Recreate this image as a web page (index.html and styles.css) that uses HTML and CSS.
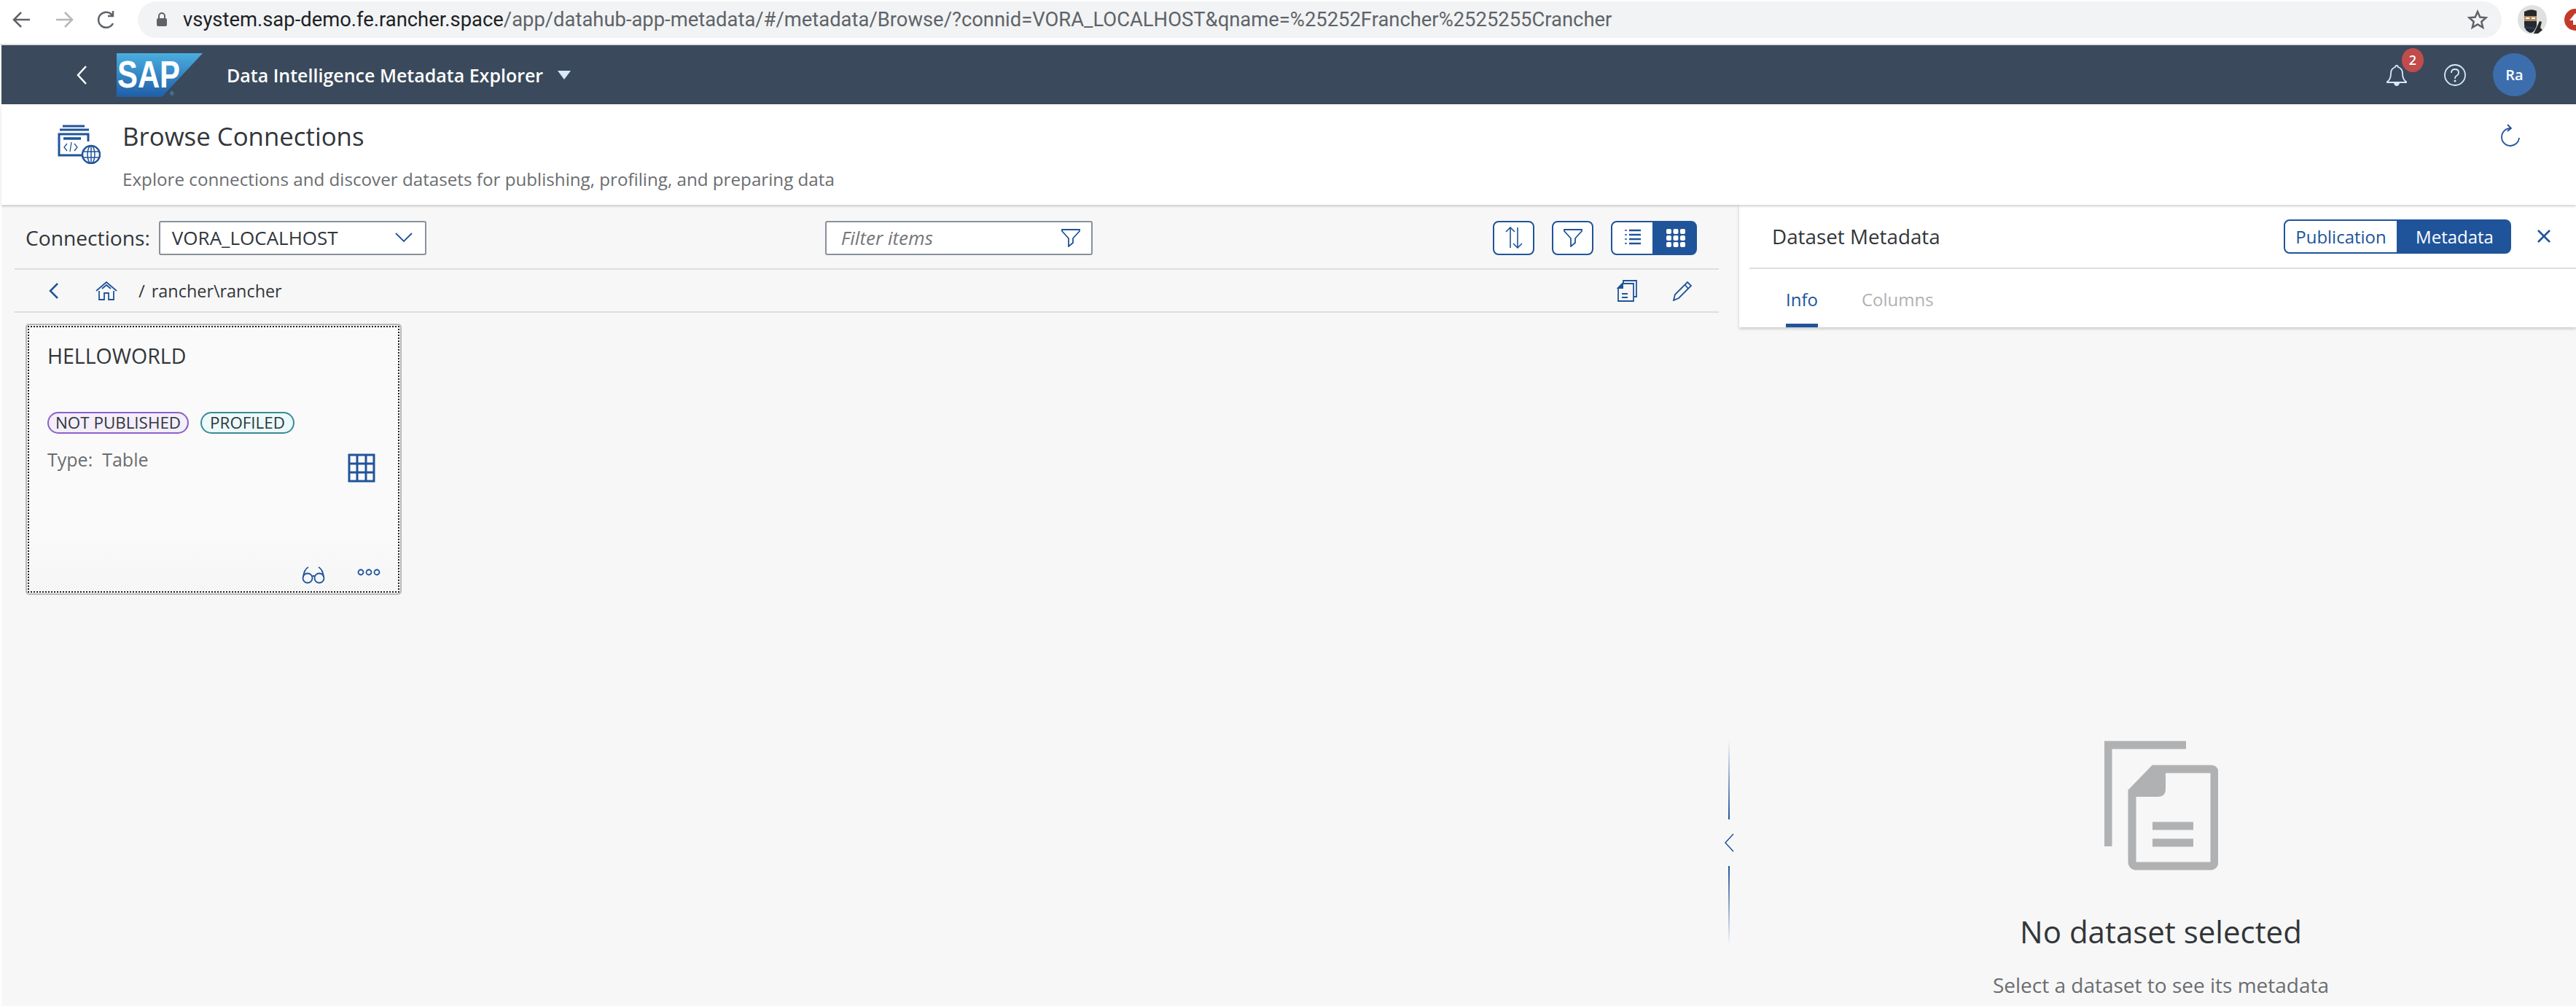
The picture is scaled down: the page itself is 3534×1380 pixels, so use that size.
FILE: index.html
```html
<!DOCTYPE html>
<html lang="en">
<head>
<meta charset="utf-8">
<title>Browse Connections</title>
<link rel="stylesheet" href="styles.css">
</head>
<body>
<div class="browser">
  <svg class="nav-ic first" width="26" height="26" viewBox="0 0 26 26"><path d="M24 13H3M12 3 2 13l10 10" class="st-dark"/></svg>
  <svg class="nav-ic" width="26" height="26" viewBox="0 0 26 26"><path d="M2 13h21M14 3l10 10-10 10" class="st-grey"/></svg>
  <svg class="nav-ic" width="26" height="28" viewBox="0 0 26 28"><path d="M22 19a10.500 10.500 0 1 1-1-11M22 2v7h-7" class="st-dark"/></svg>
  <div class="omnibox">
    <svg class="lock" width="16" height="20" viewBox="0 0 16 20"><path d="M4 8V5a4 4 0 0 1 8 0v3" fill="none" stroke="#5f6368" stroke-width="2"/><rect x="1" y="8" width="14" height="11" rx="2" fill="#5f6368"/></svg>
    <span class="url"><span class="url-host">vsystem.sap-demo.fe.rancher.space</span>/app/datahub-app-metadata/#/metadata/Browse/?connid=VORA_LOCALHOST&amp;qname=%25252Francher%2525255Crancher</span>
    <svg class="star" width="28" height="28" viewBox="0 0 28 28"><path d="m14 3 3.300 7.600 8.200.7-6.200 5.400 1.900 8L14 20.500 6.800 24.700l1.900-8L2.500 11.300l8.200-.7z" fill="none" stroke="#5f6368" stroke-width="2.500"/></svg>
  </div>
  <svg class="ninja" width="40" height="40" viewBox="0 0 40 40"><ellipse cx="20" cy="20" rx="20" ry="20" fill="#e0e0e0"/><path d="M9 9q9-5 17-1v20q-3 10-9 10-8-3-8-12z" fill="#26282b"/><rect x="9" y="15" width="17" height="7" fill="#b08a64"/><path d="M11 18h5M19 18h5" stroke="#fff" stroke-width="2"/><path d="M9 30l14 2" stroke="#1f3f7a" stroke-width="2"/><path d="m30 22 3 1-2 8 3 3-6 5-6 0z" fill="#26282b"/></svg>
  <svg class="ext" width="30" height="30" viewBox="0 0 30 30"><circle cx="15" cy="15" r="15" fill="#c5392b"/><path d="M15 6 7 16h5v6h6v-6h5z" fill="#fff"/></svg>
</div>
<header class="shell">
  <svg class="shell-back" width="16" height="26" viewBox="0 0 16 26"><path d="M14 1 3 13l11 12" fill="none" stroke="#fff" stroke-width="2.500"/></svg>
  <svg class="sap" width="118" height="60" viewBox="0 0 118 60">
    <defs><linearGradient id="sapg" x1="0" y1="0" x2="0" y2="1"><stop offset="0" stop-color="#4aaee0"/><stop offset="1" stop-color="#1f5ea8"/></linearGradient></defs>
    <polygon points="0,0 118,0 62,60 0,60" fill="url(#sapg)"/>
    <text x="1" y="47" class="sap-text" textLength="86" lengthAdjust="spacingAndGlyphs">SAP</text>
    <text x="73" y="58" class="sap-reg">®</text>
  </svg>
  <span class="shell-title">Data Intelligence Metadata Explorer</span>
  <svg class="caret" width="18" height="12" viewBox="0 0 18 12"><path d="M0 0h18L9 12z" fill="#d8e9fb"/></svg>
  <div class="shell-right">
    <div class="bell">
      <svg width="28" height="30" viewBox="0 0 28 30"><path d="M14 2q2 0 2 2 6 2 6 9 0 8 5 11v1H1v-1q5-3 5-11 0-7 6-9 0-2 2-2z" fill="none" stroke="#d8e9fb" stroke-width="1.800"/><path d="M10 26h8q-1 4-4 4t-4-4z" fill="#d8e9fb"/></svg>
      <span class="badge">2</span>
    </div>
    <svg class="help" width="30" height="30" viewBox="0 0 30 30"><circle cx="15" cy="15" r="14" fill="none" stroke="#d8e9fb" stroke-width="1.800"/><path d="M10 12q0-5 5-5t5 4.500q0 3-3 4.500-2 1-2 4" fill="none" stroke="#d8e9fb" stroke-width="1.800"/><circle cx="15" cy="23" r="1.500" fill="#d8e9fb"/></svg>
    <div class="user">Ra</div>
  </div>
</header>
<section class="page-head">
  <svg class="page-ic" width="60" height="54" viewBox="0 0 60 54">
    <path d="M8 2h30M4 7h40" stroke="#20549a" stroke-width="3"/>
    <path d="M36 42H3V13h40v10" fill="none" stroke="#20549a" stroke-width="3"/>
    <path d="M9 19h24" stroke="#20549a" stroke-width="3.500"/>
    <path d="M14 26l-4 5 4 5M20 24l-2 13M24 26l4 5-4 5" fill="none" stroke="#20549a" stroke-width="1.300"/>
    <circle cx="47" cy="41" r="12" fill="#fff" stroke="#20549a" stroke-width="2.500"/>
    <ellipse cx="47" cy="41" rx="5" ry="12" fill="none" stroke="#20549a" stroke-width="1.500"/>
    <path d="M35 37h24M35 45h24M47 29v24" stroke="#20549a" stroke-width="1.500"/>
  </svg>
  <div class="page-text">
    <h1 class="page-title">Browse Connections</h1>
    <p class="page-sub">Explore connections and discover datasets for publishing, profiling, and preparing data</p>
  </div>
  <svg class="refresh" width="28" height="32" viewBox="0 0 28 32"><path d="M14 6a12 12 0 1 0 12 13M10 1l5 5-5 4" fill="none" stroke="#20549a" stroke-width="1.800"/></svg>
</section>
<main class="workspace">
  <section class="browse">
    <div class="toolbar">
      <label class="conn-label">Connections:</label>
      <div class="select"><span>VORA_LOCALHOST</span>
        <svg width="24" height="14" viewBox="0 0 24 14"><path d="M1 1l11 11L23 1" fill="none" stroke="#20549a" stroke-width="1.800"/></svg>
      </div>
      <div class="filter"><span>Filter items</span>
        <svg width="26" height="26" viewBox="0 0 26 26"><path d="M1 2h24v2L16 14v6l-6 5V14L1 4z" fill="none" stroke="#20549a" stroke-width="1.800"/></svg>
      </div>
      <div class="tools">
        <button class="tbtn"><svg width="30" height="30" viewBox="0 0 30 30"><path d="M10 29V1M4 7l6-6 6 6M20 1v28M14 23l6 6 6-6" fill="none" stroke="#20549a" stroke-width="1.600"/></svg></button>
        <button class="tbtn"><svg width="26" height="26" viewBox="0 0 26 26"><path d="M1 2h24v2L16 14v6l-6 5V14L1 4z" fill="none" stroke="#20549a" stroke-width="1.800"/></svg></button>
        <div class="seg-view">
          <button class="vbtn"><svg width="26" height="26" viewBox="0 0 26 26"><path d="M8 3h16M8 9h16M8 15h16M8 21h16" stroke="#20549a" stroke-width="2.500"/><path d="M2 3h3M2 9h3M2 15h3M2 21h3" stroke="#20549a" stroke-width="1.500"/></svg></button>
          <button class="vbtn on"><svg width="28" height="26" viewBox="0 0 28 26"><g fill="#fff"><rect x="1" y="1" width="7" height="7" rx="2"/><rect x="10.500" y="1" width="7" height="7" rx="2"/><rect x="20" y="1" width="7" height="7" rx="2"/><rect x="1" y="10" width="7" height="7" rx="2"/><rect x="10.500" y="10" width="7" height="7" rx="2"/><rect x="20" y="10" width="7" height="7" rx="2"/><rect x="1" y="19" width="7" height="7" rx="2"/><rect x="10.500" y="19" width="7" height="7" rx="2"/><rect x="20" y="19" width="7" height="7" rx="2"/></g></svg></button>
        </div>
      </div>
    </div>
    <div class="crumbs">
      <svg class="cr-back" width="16" height="24" viewBox="0 0 16 24"><path d="M13 2 3 12l10 10" fill="none" stroke="#20549a" stroke-width="2.500"/></svg>
      <svg class="cr-home" width="30" height="26" viewBox="0 0 30 26"><path d="M1 13 15 1l14 12M5 13v12h7v-9h6v9h7V13M9 10l6-5 6 5" fill="none" stroke="#20549a" stroke-width="1.800"/></svg>
      <span class="cr-sep">/</span>
      <span class="cr-path">rancher\rancher</span>
      <div class="cr-tools">
        <svg width="28" height="30" viewBox="0 0 28 30"><path d="M9 5V1h18v22h-3" fill="none" stroke="#20549a" stroke-width="1.800"/><path d="M8 5h15v24H2V11z" fill="none" stroke="#20549a" stroke-width="1.800"/><path d="M7 19h8M7 24h8M2 11h6V5z" stroke="#20549a" stroke-width="2" fill="#20549a"/></svg>
        <svg width="28" height="28" viewBox="0 0 28 28"><path d="M21 2l5 5L9 24l-7 3 2-8zM18 6l4 5" fill="none" stroke="#20549a" stroke-width="1.800"/></svg>
      </div>
    </div>
    <article class="card">
      <div class="card-inner">
        <h2 class="card-title">HELLOWORLD</h2>
        <div class="tags"><span class="tag tag-purple">NOT PUBLISHED</span><span class="tag tag-teal">PROFILED</span></div>
        <div class="card-meta">
          <span class="card-type">Type:&nbsp; Table</span>
          <svg class="card-kind" width="38" height="40" viewBox="0 0 38 40"><path d="M2 2h34v36H2zM13 2v36M25 2v36M2 14h34M2 26h34" fill="none" stroke="#20549a" stroke-width="3"/></svg>
        </div>
        <div class="card-actions">
          <svg width="32" height="24" viewBox="0 0 32 24"><circle cx="8" cy="16" r="6.500" fill="none" stroke="#20549a" stroke-width="1.800"/><circle cx="24" cy="16" r="6.500" fill="none" stroke="#20549a" stroke-width="1.800"/><path d="M14 14q2-2 4 0M2 15Q3 4 9 1M30 15Q29 4 23 1" fill="none" stroke="#20549a" stroke-width="1.800"/></svg>
          <svg class="card-more" width="32" height="10" viewBox="0 0 32 10"><circle cx="5" cy="5" r="3.500" fill="none" stroke="#20549a" stroke-width="1.800"/><circle cx="16" cy="5" r="3.500" fill="none" stroke="#20549a" stroke-width="1.800"/><circle cx="27" cy="5" r="3.500" fill="none" stroke="#20549a" stroke-width="1.800"/></svg>
        </div>
      </div>
    </article>
  </section>
  <div class="splitter">
    <div class="split-line up"></div>
    <svg width="14" height="26" viewBox="0 0 14 26"><path d="M13 1 2 13l11 12" fill="none" stroke="#20549a" stroke-width="1.500"/></svg>
    <div class="split-line down"></div>
  </div>
  <aside class="detail">
    <div class="detail-head">
      <div class="detail-bar">
        <span class="detail-title">Dataset Metadata</span>
        <div class="seg"><span class="seg-item">Publication</span><span class="seg-item on">Metadata</span></div>
        <svg class="close" width="20" height="20" viewBox="0 0 20 20"><path d="M2 2l16 16M18 2 2 18" stroke="#20549a" stroke-width="2.500"/></svg>
      </div>
      <div class="tabs"><span class="tab on">Info</span><span class="tab">Columns</span></div>
    </div>
    <div class="empty">
      <svg class="empty-ic" width="156" height="178" viewBox="0 0 156 178">
        <path d="M112 6H5v139" fill="none" stroke="#b0b1b3" stroke-width="11"/>
        <path d="M68 39h78q5 0 5 5v122q0 6-6 6H44q-6 0-6-6V70z" fill="none" stroke="#b0b1b3" stroke-width="11"/>
        <path d="M66 36h18v30q0 11-11 11H36v-8z" fill="#b0b1b3"/>
        <path d="M66 117h56M66 140h56" stroke="#b0b1b3" stroke-width="11"/>
      </svg>
      <div class="empty-title">No dataset selected</div>
      <div class="empty-sub">Select a dataset to see its metadata</div>
    </div>
  </aside>
</main>
</body>
</html>
```
FILE: styles.css
```css
* { box-sizing: border-box; }
html, body { margin: 0; height: 100%; }
body {
  width: 3534px;
  height: 1380px;
  overflow: hidden;
  background: #fff;
  font-family: "Open Sans", "Noto Sans", sans-serif;
  color: #32363a;
  display: flex;
  flex-direction: column;
}
svg { display: block; flex: none; }
button { padding: 0; font: inherit; cursor: pointer; }

.st-dark, .st-grey { fill: none; stroke-width: 2.500; }
.st-dark { stroke: #5f6368; }
.st-grey { stroke: #b5b7ba; }

.browser {
  height: 62px;
  flex: none;
  display: flex;
  align-items: center;
  border-bottom: 2px solid #dfe1e5;
  padding-bottom: 6px;
}
.nav-ic { margin-right: 32px; }
.nav-ic.first { margin-left: 17px; }
.omnibox {
  flex: none;
  margin-left: -2px;
  width: 3243px;
  height: 50px;
  border-radius: 25px;
  background: #f1f3f4;
  display: flex;
  align-items: center;
  padding-left: 25px;
}
.lock { margin-right: 21px; }
.url { font-family: Roboto, sans-serif; font-size: 27.400px; color: #5f6368; white-space: nowrap; flex: 1; }
.url-host { color: #202124; }
.star { margin-right: 19px; }
.ninja { margin-left: 22px; }
.ext { margin-left: 24px; }

.shell {
  height: 81px;
  flex: none;
  margin-left: 2px;
  background: #3a4a5c;
  display: flex;
  align-items: center;
  color: #fff;
}
.shell-back { margin-left: 102px; }
.sap { margin-left: 40px; }
.sap-text { font-family: "Liberation Sans", sans-serif; font-weight: 700; font-size: 52px; fill: #fff; }
.sap-reg { font-family: "Liberation Sans", sans-serif; font-size: 8px; fill: #4aaee0; }
.shell-title { margin-left: 33px; font-size: 25px; font-weight: 600; white-space: nowrap; }
.caret { margin-left: 20px; }
.shell-right { margin-left: auto; display: flex; align-items: center; padding-right: 55px; }
.bell { position: relative; margin-right: 51px; }
.badge {
  position: absolute; left: 21px; top: -22px;
  width: 30px; height: 33px; border-radius: 50%;
  background: #c14c4c; color: #fff;
  font-size: 18px; font-weight: 600; text-align: center; line-height: 33px;
}
.help { margin-right: 37px; }
.user {
  width: 59px; height: 59px; border-radius: 50%;
  background: #3c6eae; color: #fff;
  font-size: 20px; font-weight: 600; text-align: center; line-height: 59px;
}

.page-head {
  height: 138px;
  flex: none;
  margin-left: 2px;
  display: flex;
  background: #fff;
  box-shadow: 0 2px 3px rgba(0,0,0,.18);
  position: relative;
  z-index: 2;
}
.page-ic { margin: 28px 0 0 76px; }
.page-text { margin-left: 30px; }
.page-title { margin: 22px 0 0; font-size: 34.800px; font-weight: 400; line-height: 44px; }
.page-sub { margin: 21px 0 0; font-size: 24.200px; line-height: 32px; color: #6a6d70; }
.refresh { margin: 27px 76px 0 auto; }

.workspace {
  flex: 1;
  min-height: 0;
  margin-left: 2px;
  display: flex;
  background: #f7f7f7;
}
.browse { width: 2356px; flex: none; padding-left: 18px; }
.toolbar {
  height: 89px;
  display: flex;
  align-items: center;
  border-bottom: 2px solid #dedede;
  padding: 3px 30px 0 15px;
}
.conn-label { font-size: 28.200px; }
.select {
  margin-left: 12px;
  width: 367px; height: 47px;
  background: #fff;
  border: 2px solid #89919a;
  border-radius: 3px;
  display: flex; align-items: center; justify-content: space-between;
  padding: 0 17px 0 16px;
  font-size: 26px;
}
.filter {
  margin-left: 547px;
  width: 367px; height: 47px;
  background: #fff;
  border: 2px solid #89919a;
  border-radius: 3px;
  display: flex; align-items: center; justify-content: space-between;
  padding: 0 15px 0 20px;
  font-size: 26px; font-style: italic; color: #74777a;
}
.tools { margin-left: auto; display: flex; gap: 24px; align-items: center; }
.tbtn {
  width: 57px; height: 47px;
  background: #fff;
  border: 2px solid #20549a;
  border-radius: 8px;
  display: flex; align-items: center; justify-content: center;
}
.seg-view { display: flex; }
.vbtn {
  width: 59px; height: 47px;
  background: #fff;
  border: 2px solid #20549a;
  border-radius: 8px 0 0 8px;
  display: flex; align-items: center; justify-content: center;
}
.vbtn.on { background: #20549a; border-radius: 0 8px 8px 0; }

.crumbs {
  height: 59px;
  display: flex;
  align-items: center;
  border-bottom: 2px solid #dedede;
  padding: 0 36px 0 46px;
}
.cr-home { margin-left: 49px; }
.cr-sep { margin-left: 29px; font-size: 24px; }
.cr-path { margin-left: 9px; font-size: 23.400px; }
.cr-tools { margin-left: auto; display: flex; gap: 48px; align-items: center; }

.card {
  margin: 15px 0 0 15px;
  width: 516px;
  height: 372px;
  border: 2px solid #b8b8b8;
  border-radius: 5px;
  padding: 1px;
  display: flex;
}
.card-inner {
  flex: 1;
  min-width: 0;
  background: linear-gradient(to bottom, #fafafa 78%, #f6f6f6);
  border: 2px dotted #222;
  padding: 20px 31px 10px 25px;
  display: flex;
  flex-direction: column;
}
.card-title { margin: 0; font-size: 28.500px; font-weight: 400; line-height: 38px; }
.tags { display: flex; gap: 16px; margin-top: 58px; }
.tag {
  height: 30px; line-height: 26px;
  border-radius: 15px;
  padding: 0 9px;
  font-size: 22.400px;
  white-space: nowrap;
}
.tag-purple { border: 2px solid #8d5fc8; background: #f3eefa; }
.tag-teal { border: 2px solid #3a8a94; background: #ebfbfc; padding: 0 11px; }
.card-meta { display: flex; justify-content: space-between; align-items: flex-start; margin-top: 19px; }
.card-type { font-size: 25px; color: #6a6d70; line-height: 32px; }
.card-kind { margin-top: 8px; }
.card-actions { margin: auto -7px 0 0; display: flex; justify-content: flex-end; align-items: center; gap: 44px; }
.card-more { margin-bottom: 8px; }

.splitter {
  width: 28px; flex: none;
  display: flex; flex-direction: column; align-items: center;
  padding-top: 735px;
  gap: 19px;
}
.split-line { width: 2px; height: 108px; }
.split-line.up { background: linear-gradient(to bottom, rgba(32,84,154,0), #20549a); }
.split-line.down { background: linear-gradient(to top, rgba(32,84,154,0), #20549a); }

.detail { flex: 1; min-width: 0; display: flex; flex-direction: column; }
.detail-head {
  height: 168px;
  background: #fff;
  box-shadow: 0 2px 4px rgba(0,0,0,.2);
}
.detail-bar {
  height: 88px;
  margin-left: 14px;
  border-bottom: 2px solid #dedede;
  display: flex;
  align-items: center;
  padding-left: 31px;
}
.detail-title { font-size: 27.800px; }
.seg { margin-left: auto; display: flex; height: 47px; font-size: 24px; }
.seg-item {
  width: 157px; line-height: 43px; text-align: center;
  border: 2px solid #20549a; color: #20549a;
  border-radius: 8px 0 0 8px;
  background: #fff;
}
.seg-item.on { width: 155px; background: #20549a; color: #fff; border-radius: 0 8px 8px 0; }
.close { margin: 0 34px 0 35px; }
.tabs { display: flex; gap: 60px; padding-left: 64px; height: 80px; }
.tab { font-size: 24px; color: #b0b1b3; line-height: 84px; }
.tab.on { color: #20549a; border-bottom: 5px solid #20549a; height: 80px; }

.empty { flex: 1; display: flex; flex-direction: column; align-items: center; padding-top: 1px; margin-left: 9px; }
.empty-ic { margin-top: 566px; }
.empty-title { margin-top: 56px; font-size: 42px; line-height: 56px; white-space: nowrap; }
.empty-sub { margin-top: 27px; font-size: 28px; line-height: 36px; color: #6a6d70; white-space: nowrap; }
```
